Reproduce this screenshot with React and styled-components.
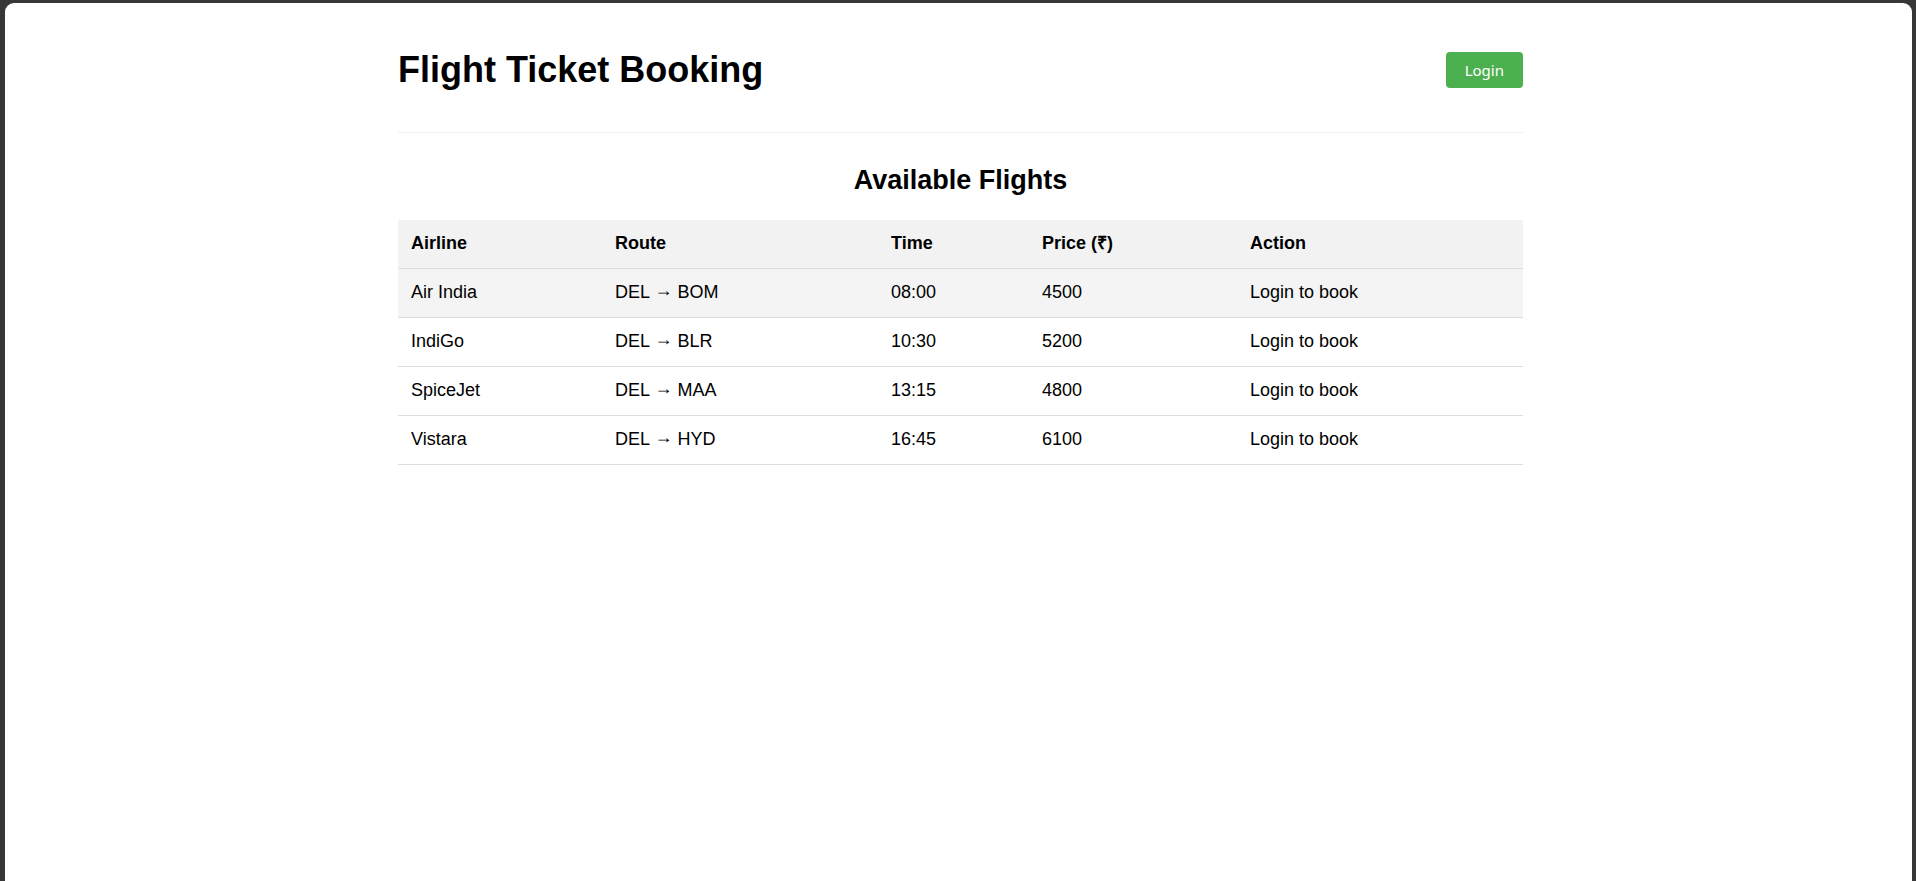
import React from 'react'
import styled, { createGlobalStyle } from 'styled-components'

const GlobalStyle = createGlobalStyle`
  html, body {
    margin: 0;
    padding: 0;
    background: #373737;
    overflow: hidden;
  }
  body {
    font-family: 'Liberation Sans', Arial, sans-serif;
    color: #000;
  }
`

const Window = styled.div`
  margin: 3px 4px 0 5px;
  padding-left: 4px;
  height: calc(100vh - 3px);
  background: #fff;
  border-radius: 9px 9px 0 0;
`

const Container = styled.div`
  max-width: 1125px;
  margin: 0 auto;
`

const Header = styled.header`
  display: flex;
  align-items: center;
  justify-content: space-between;
  padding: 49px 0 44px;
  border-bottom: 1px solid #eee;
`

const Title = styled.h1`
  margin: 0;
  font-size: 36px;
  line-height: 36px;
  font-weight: bold;
`

const LoginButton = styled.button`
  height: 36px;
  padding: 0 19px;
  border: none;
  border-radius: 4px;
  background: #4caf50;
  color: #fff;
  font-family: 'Noto Sans', 'Open Sans', sans-serif;
  font-size: 15px;
  cursor: pointer;
`

const Section = styled.section`
  padding-top: 32px;
`

const Heading = styled.h2`
  margin: 0 0 24px;
  text-align: center;
  font-size: 27px;
  line-height: 31px;
  font-weight: bold;
`

const Table = styled.table`
  width: 100%;
  border-collapse: collapse;
  table-layout: fixed;
  font-size: 18px;
`

const Th = styled.th`
  box-sizing: border-box;
  width: ${(p) => p.$w || 'auto'};
  padding: 12px 13px 14px;
  line-height: 22px;
  text-align: left;
  font-weight: bold;
  background: #f2f2f2;
  border-bottom: 1px solid #ddd;
`

const Row = styled.tr`
  background: ${(p) => (p.$highlight ? '#f4f4f4' : '#fff')};
  &:hover {
    background: #f4f4f4;
  }
`

const Td = styled.td`
  padding: 12px 13px 14px;
  line-height: 22px;
  border-bottom: 1px solid #ddd;
`

const Arrow = styled.span`
  display: inline-block;
  line-height: 1;
  transform: translateY(-2px);
`

const flights = [
  { airline: 'Air India', from: 'DEL', to: 'BOM', time: '08:00', price: 4500 },
  { airline: 'IndiGo', from: 'DEL', to: 'BLR', time: '10:30', price: 5200 },
  { airline: 'SpiceJet', from: 'DEL', to: 'MAA', time: '13:15', price: 4800 },
  { airline: 'Vistara', from: 'DEL', to: 'HYD', time: '16:45', price: 6100 },
]

const App = () => {
  return (
    <>
      <GlobalStyle />
      <Window>
        <Container>
          <Header>
            <Title>Flight Ticket Booking</Title>
            <LoginButton>Login</LoginButton>
          </Header>
          <Section>
            <Heading>Available Flights</Heading>
            <Table>
              <thead>
                <tr>
                  <Th $w='204px'>Airline</Th>
                  <Th $w='276px'>Route</Th>
                  <Th $w='151px'>Time</Th>
                  <Th $w='208px'>Price (₹)</Th>
                  <Th>Action</Th>
                </tr>
              </thead>
              <tbody>
                {flights.map((f, i) => (
                  <Row key={f.airline} $highlight={i === 0}>
                    <Td>{f.airline}</Td>
                    <Td>
                      {f.from} <Arrow>→</Arrow> {f.to}
                    </Td>
                    <Td>{f.time}</Td>
                    <Td>{f.price}</Td>
                    <Td>Login to book</Td>
                  </Row>
                ))}
              </tbody>
            </Table>
          </Section>
        </Container>
      </Window>
    </>
  )
}

export default App
